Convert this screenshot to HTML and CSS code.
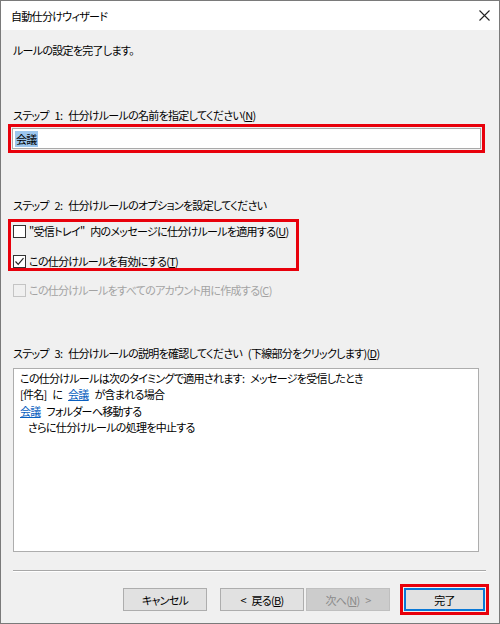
FILE: index.html
```html
<!DOCTYPE html>
<html lang="ja">
<head>
<meta charset="utf-8">
<title>自動仕分けウィザード</title>
<link rel="stylesheet" href="styles.css">
</head>
<body>
<div class="window">
  <div class="titlebar">
    <span class="title">自動仕分けウィザード</span>
    <svg class="close" width="11" height="11" viewBox="0 0 11 11"><path d="M0.5 0.5 L10.5 10.5 M10.5 0.5 L0.5 10.5" stroke="#222" stroke-width="1.1" fill="none"/></svg>
  </div>
  <div class="content">
    <div class="text intro">ルールの設定を完了します。</div>

    <div class="text step1">ステップ 1: 仕分けルールの名前を指定してください(<u>N</u>)</div>
    <div class="mark mark-name">
      <div class="input"><span class="sel">会議</span></div>
    </div>

    <div class="text step2">ステップ 2: 仕分けルールのオプションを設定してください</div>
    <div class="mark mark-opts">
      <div class="check-row"><span class="cb"></span><span>"受信トレイ" 内のメッセージに仕分けルールを適用する(<u>U</u>)</span></div>
      <div class="check-row row2"><span class="cb"><svg width="11" height="11" viewBox="0 0 11 11"><path d="M1.5 5.5 L4.2 8.3 L9.5 2.2" stroke="#222" stroke-width="1.2" fill="none"/></svg></span><span>この仕分けルールを有効にする(<u>T</u>)</span></div>
    </div>
    <div class="check-row disabled"><span class="cb"></span><span>この仕分けルールをすべてのアカウント用に作成する(<u>C</u>)</span></div>

    <div class="text step3">ステップ 3: 仕分けルールの説明を確認してください (下線部分をクリックします)(<u>D</u>)</div>
    <div class="desc">
      <div class="line">この仕分けルールは次のタイミングで適用されます: メッセージを受信したとき</div>
      <div class="line">[件名] に <a class="link">会議</a> が含まれる場合</div>
      <div class="line"><a class="link">会議</a> フォルダーへ移動する</div>
      <div class="line indent">さらに仕分けルールの処理を中止する</div>
    </div>

    <div class="separator"></div>

    <div class="buttons">
      <div class="btn btn-cancel">キャンセル</div>
      <div class="btn btn-back">&lt; 戻る(<u>B</u>)</div>
      <div class="btn btn-next disabled-btn">次へ(<u>N</u>) &gt;</div>
      <div class="mark mark-finish"><div class="btn btn-finish">完了</div></div>
    </div>
  </div>
</div>
</body>
</html>
```

FILE: styles.css
```css
html, body {
  margin: 0;
  padding: 0;
}
body {
  font-family: "Noto Sans CJK JP", "Noto Sans", sans-serif;
  font-size: 11px;
  font-feature-settings: "palt";
  letter-spacing: -0.7px;
  word-spacing: 4px;
  color: #000;
}
.window {
  width: 500px;
  height: 624px;
  box-sizing: border-box;
  border: 1px solid #7a7a7a;
  background: #f0f0f0;
  display: flex;
  flex-direction: column;
}
.titlebar {
  height: 29px;
  background: #fff;
  display: flex;
  align-items: center;
  justify-content: space-between;
  padding: 0 9px 0 10px;
  flex: none;
}
.title {
  line-height: 16px;
}
.close {
  display: block;
}
.content {
  flex: 1;
  display: flex;
  flex-direction: column;
}
.text {
  line-height: 16px;
  height: 16px;
  padding-left: 12px;
  white-space: nowrap;
}
.intro { margin-top: 12px; }
.step1 { margin-top: 49px; }
.mark {
  border: 3px solid #e8000b;
  padding: 1px;
  box-sizing: border-box;
}
.mark-name {
  margin: 1px 0 0 7px;
  width: 477px;
  height: 29px;
}
.input {
  height: 19px;
  border: 1px solid #a9a9a9;
  background: #fff;
  display: flex;
  align-items: center;
  padding-left: 2px;
}
.sel {
  background: #9cc6ee;
  line-height: 16px;
  padding: 0 1px;
}
.step2 { margin-top: 44px; }
.mark-opts {
  margin: 6px 0 0 7px;
  width: 291px;
  height: 52px;
  padding: 2px 0 0 2px;
}
.check-row {
  display: flex;
  align-items: center;
  height: 14px;
  line-height: 14px;
  white-space: nowrap;
}
.row2 { margin-top: 16px; }
.cb {
  width: 11px;
  height: 11px;
  border: 1px solid #333;
  background: #fff;
  margin-right: 3px;
  flex: none;
  display: flex;
  align-items: center;
  justify-content: center;
}
.cb svg { display: block; }
.disabled {
  margin: 12px 0 0 12px;
  color: #a3a3a3;
}
.disabled .cb {
  border-color: #c4c4c4;
  background: #f0f0f0;
}
.step3 { margin-top: 48px; }
.desc {
  margin: 7px 0 0 12px;
  width: 466px;
  height: 184px;
  box-sizing: border-box;
  border: 1px solid #adadad;
  background: #fff;
  padding: 1px 0 0 6px;
}
.line {
  line-height: 16.4px;
  height: 16.4px;
  white-space: nowrap;
}
.indent { padding-left: 8px; }
.link {
  color: #0a5fbf;
  text-decoration: underline;
}
.separator {
  margin: 18px 0 0 12px;
  width: 473px;
  height: 1px;
  background: #a8a8a8;
  border-bottom: 1px solid #fff;
}
.buttons {
  display: flex;
  align-items: center;
  margin-top: 12px;
  padding-left: 122px;
}
.btn {
  height: 23px;
  box-sizing: border-box;
  border: 1px solid #adadad;
  background: #e1e1e1;
  display: flex;
  align-items: center;
  justify-content: center;
  white-space: nowrap;
}
.btn-cancel { width: 84px; }
.btn-back { width: 84px; margin-left: 13px; }
.btn-next { width: 84px; margin-left: 2px; }
.disabled-btn {
  background: #cccccc;
  border-color: #bfbfbf;
  color: #8a8a8a;
}
.mark-finish {
  margin-left: 10px;
  width: 89px;
  height: 31px;
}
.btn-finish {
  width: 81px;
  height: 23px;
  border: 2px solid #0a78d6;
}
```
